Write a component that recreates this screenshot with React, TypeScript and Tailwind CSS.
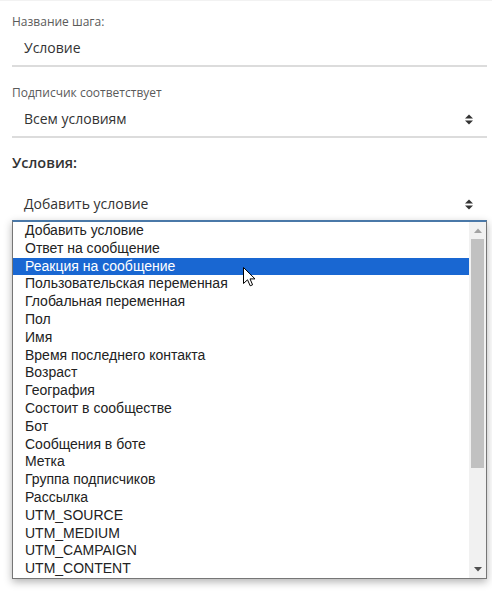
import React from "react";

const OPTIONS = [
  "Добавить условие",
  "Ответ на сообщение",
  "Реакция на сообщение",
  "Пользовательская переменная",
  "Глобальная переменная",
  "Пол",
  "Имя",
  "Время последнего контакта",
  "Возраст",
  "География",
  "Состоит в сообществе",
  "Бот",
  "Сообщения в боте",
  "Метка",
  "Группа подписчиков",
  "Рассылка",
  "UTM_SOURCE",
  "UTM_MEDIUM",
  "UTM_CAMPAIGN",
  "UTM_CONTENT",
];

const SortIcon = () => (
  <svg width="8" height="11" viewBox="0 0 8 11" className="shrink-0">
    <path d="M0 4.5 L4 0.5 L8 4.5 Z" fill="#333" />
    <path d="M0 6.5 L8 6.5 L4 10.5 Z" fill="#333" />
  </svg>
);

const Cursor = () => (
  <svg
    width="13"
    height="20"
    viewBox="0 0 13 20"
    className="absolute left-[243px] top-[266px]"
  >
    <path
      d="M0.5 0.5 L0.5 16.5 L4.5 12.8 L7.2 18.8 L9.6 17.8 L7 11.9 L12 11.9 Z"
      fill="#fff"
      stroke="#000"
      strokeWidth="1"
      strokeLinejoin="miter"
    />
  </svg>
);

const Field = ({ label, value, select }: { label: string; value: string; select?: boolean }) => (
  <div className="flex flex-col">
    <div className="h-4 text-[12px] leading-4 text-[#5a5a5a]">{label}</div>
    <div className="mt-[6px] flex h-6 items-center justify-between pl-3 pr-[14px] text-[14px] leading-6 text-[#333]">
      <span>{value}</span>
      {select && <SortIcon />}
    </div>
    <div className="mt-[5px] h-[2px] bg-[#dcdcdc]" />
  </div>
);

export default function App() {
  return (
    <div
      className="relative h-[604px] w-[492px] overflow-hidden border-t border-[#f2f2f2] bg-white"
      style={{ fontFamily: '"Open Sans", "Liberation Sans", sans-serif' }}
    >
      <div className="flex flex-col pl-3 pr-[5px] pt-[13px]">
        <Field label="Название шага:" value="Условие" />
        <div className="mt-[18px]">
          <Field label="Подписчик соответствует" value="Всем условиям" select />
        </div>
        <div className="mt-[13px] h-6 text-[14.5px] font-semibold leading-6 text-[#333]">Условия:</div>
        <div className="mt-[17px] flex h-6 items-center justify-between pl-3 pr-[14px] text-[14px] leading-6 text-[#333]">
          <span>Добавить условие</span>
          <SortIcon />
        </div>

        {/* open dropdown */}
        <div className="mt-[4px] flex border-x border-b border-t-2 border-x-[#767676] border-b-[#767676] border-t-[#4a78a8] bg-white shadow-[0_3px_8px_rgba(0,0,0,0.3)]">
          <div
            className="flex flex-1 flex-col text-[14px] text-[#222]"
            style={{ fontFamily: '"Liberation Sans", Arial, sans-serif' }}
          >
            {OPTIONS.map((o, i) => (
              <div
                key={o}
                className={
                  i === 2
                    ? "h-[17.8px] bg-[#1967d2] pl-3 leading-[17.8px] text-white"
                    : "h-[17.8px] pl-3 leading-[17.8px]"
                }
              >
                {o}
              </div>
            ))}
          </div>
          <div className="flex w-[17px] flex-col bg-[#f1f1f1]">
            <div className="flex h-[17px] items-center justify-center">
              <svg width="8" height="5" viewBox="0 0 8 5">
                <path d="M0 5 L4 0.5 L8 5 Z" fill="#a3a3a3" />
              </svg>
            </div>
            <div className="mx-[2px] h-[229px] bg-[#c1c1c1]" />
            <div className="flex-1" />
            <div className="flex h-[17px] items-center justify-center">
              <svg width="8" height="5" viewBox="0 0 8 5">
                <path d="M0 0 L8 0 L4 4.5 Z" fill="#505050" />
              </svg>
            </div>
          </div>
        </div>
      </div>
      <Cursor />
    </div>
  );
}
